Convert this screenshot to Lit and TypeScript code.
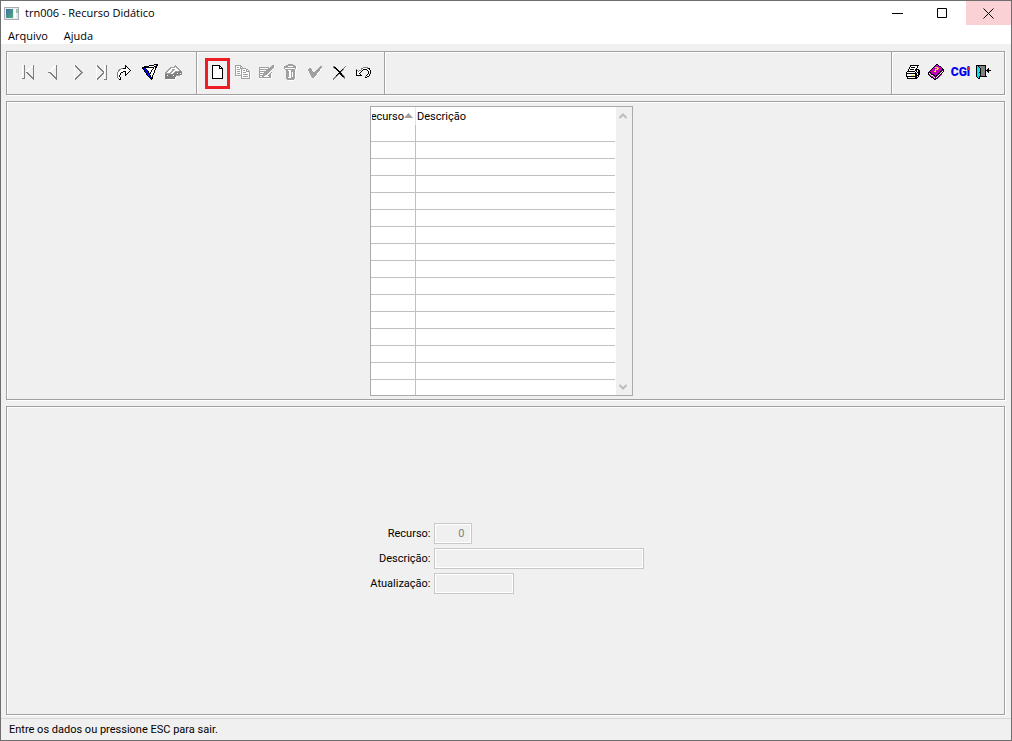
import { LitElement, html, svg, css } from "lit";
import { customElement, property } from "lit/decorators.js";

const palette: Record<string, string> = {
  k: "#000000",
  g: "#808080",
  a: "#a0a0a0",
  l: "#c4c4c4",
  w: "#ffffff",
  b: "#0000ff",
  c: "#00e5ee",
  m: "#c000c0",
  p: "#700070",
  y: "#ffee00",
};

// Each glyph sits on a 24px grid: x and y give the offset of its first pixel.
const glyphs: Record<string, { x: number; y: number; rows: string[] }> = {
  first: { x: 6, y: 5, rows: [
    "w.g.......wg", "w.g......wwg", "w.g.....ww.g", "w.g....ww..g", "w.g...ww...g", "w.g..ww....g", "w.g.ww.....g",
    "w.g.gg.....g", "w.g..gg....g", "w.g...gg...g", "w.g....gg..g", "w.g.....gg.g", "w.g......ggg", "ggg.......gg", "..........wg" ] },
  prev: { x: 8, y: 5, rows: [
    ".......wg", "......wwg", ".....ww.g", "....ww..g", "...ww...g", "..ww....g", ".ww.....g", "ggg.....g",
    "..gg....g", "...gg...g", "....gg..g", ".....gg.g", "......ggg", ".......gg", "........g" ] },
  next: { x: 10, y: 5, rows: [
    "wg.......", "wgg......", "w.gg.....", "w..gg....", "w...gg...", "w....gg..", "w.....gg.", "w......gg",
    "w.....gg.", "w....gg..", "w...gg...", "w..gg....", "w.gg.....", "wgg......", "wg......." ] },
  last: { x: 8, y: 5, rows: [
    "wg......wwg", "wgg.....w.g", "w.gg....w.g", "w..gg...w.g", "w...gg..w.g", "w....gg.w.g", "w.....ggw.g", "w......gw.g",
    "w.....ggw.g", "w....gg.w.g", "w...gg..w.g", "w..gg...w.g", "w.gg....w.g", "wgg.....w.g", "wg......ggg" ] },
  goto: { x: 5, y: 5, rows: [
    "........k.....", "........kk....", "........kwk...", "....ggkkkwwk..", "..ggwwwwwwwwk.", ".ggwwwwwwwwwwk", ".gwwwwkkkwwwk.",
    "gwwwkk..kwwk..", "gwwk....kwk...", "gwwk....kk....", "gwk.....k.....", "gwk...........", "gwwk..........", ".gwk..........", "..kk.........." ] },
  filter: { x: 6, y: 4, rows: [
    "............kkkk", ".......kkkkkwwkk", "..kkkkkwwwwwkkk.", "kkkkkkkkkkkkwkk.", "kbbkwwwwwwwkwk..", ".kbbkwwwwwkwwk..", "..kbbkwwwkwwk...", "..kbbbkwwkwwk...",
    "...kbbkwkwwwk...", "....kbbkkwwk....", "....kbbkwwwk....", ".....kbbkwk.....", "......kbkwk.....", ".......kbkk.....", "........kkk.....", ".........k......" ] },
  drive: { x: 5, y: 5, rows: [
    "..........aw.....", ".........aaaw....", ".....aaaaawaaw...", "....aawwwwwwaaw..", "...aawwaaawwwaaw.", "..aawwwaawwwwwaaw", ".aawwwaawwaaaagga", "aawwwaawwaggggggg",
    "aaaaaawwagggwggwg", "ggggggggggggggggg", "ggwgggggwggaaaaww", "gggggggggggw.....", "ggggggggggw......", "ggggggggggw......", ".wwwwwwwww......." ] },
  page: { x: 7, y: 5, rows: [
    "kkkkkkkk...", "kwwwwwwkk..", "kwwwwwwkwk.", "kwwwwwwkkkk", "kwwwwwwwwwk", "kwwwwwwwwwk", "kwwwwwwwwwk", "kwwwwwwwwwk",
    "kwwwwwwwwwk", "kwwwwwwwwwk", "kwwwwwwwwwk", "kwwwwwwwwwk", "kwwwwwwwwwk", "kkkkkkkkkkk" ] },
  copy: { x: 6, y: 5, rows: [
    "aaaaaa..........", "awwwwaa.........", "awaawawa........", "awwwwaaaaaa.....", "awaaawawwwwaa...", "awwwwwawaawawa..", "awaaawawwwwaaaaw", "awwwwwawaaawwwaw",
    "awaaawawwwwwwwaw", "awwwwwawaaaaawaw", "aaaaaaawwwwwwwaw", ".wwwwwawaaaaawaw", "......awwwwwwwaw", "......aaaaaaaaaw" ] },
  edit: { x: 6, y: 5, rows: [
    ".............aa.", "............aaaw", "aaaaaaaaaa.aaaaw", "awwwwwwwwaaaaaw.", "aaaaaaaaaaaaaw..", "awwwwwwaaaaaw...", "aaaaaaaaaaaw....", "awwwwaaaaaw.a...",
    "aaaaaaaaaw.aw...", "awwwaaaaw.aaw...", "aaaaaaww.aaaw...", "awwaawwwwwaaw...", "aaaaaaaaaaaaw...", "wwwwwwwwwwwww..." ] },
  trash: { x: 7, y: 4, rows: [
    "....aaaaa....", "..aaaaaaaaa..", "aaaawwwwwaaaw", "aaaaaaaaaaaaw", "awwwwwwwwwwaw", ".aaaaaaaaaaww", "..aawwwaaaa..", "..aaawwaaaaw.",
    "..aaawwawaaw.", "..aaawwawaaw.", "..aaawwawaaw.", "..aaawwawaaw.", "..aaawwawaaw.", "..aawwwaaaaw.", "..aaaaaaaaaw.", "...aaaaaaaw..", "....wwwwww..." ] },
  check: { x: 7, y: 6, rows: [
    "............aa", "...........aaa", ".aa.......aaaw", "aaaa.....aaaw.", "aaaaw...aaaaw.", ".aaaaw.aaaaw..", ".aaaaaaaaaw...", "..aaaaaaaw....",
    "..aaaaaaaw....", "...aaaaaw.....", "...aaaaw......", "....aaw......." ] },
  cancel: { x: 8, y: 6, rows: [
    "gg..........g.", "gkk........g..", ".gkk......g...", "...kk....kg...", "....kk..kg....", ".....kkkg.....", "......kk......",
    ".....kkkk.....", "....kg.kkg....", "...kg...kkg...", "..gg.....kkg..", ".gg.......gg..", "gg.........g..", "g............." ] },
  undo: { x: 7, y: 7, rows: [
    ".......ggggg...", ".....ggwwwwgkk.", "g....gwkkkkwwk.", "kg.ggwk....kwwk", "kwgwwk......kwk", "kwwwk.......kwk", "kwwk........kwk", "kwwwk......kwk.",
    "kkkkkk....kwwk.", ".........gwkk..", ".........kk...." ] },
  print: { x: 6, y: 5, rows: [
    "....kkkkkkkkk.", "....kwwwwwwk..", "...kwkkkkwwk..", "...kwwwwwwk...", "..kwkkkkwkkkk.", "..kwwwwwwkkwkk", ".kkkkkkkkwkwkk", "kwwwwwwwwkwkkk",
    "kkkkkkkkkkkwkk", "kwwwwwwwwkkwkk", "kwwwwyyywkkkk.", "kkkkkkkkkkkwk.", ".kwwwwwwwkkk..", ".kkkkkkkkkk..." ] },
  help: { x: 4, y: 4, rows: [
    "........kk......", ".......kmmk.....", "......kmmmmkk...", ".....kmyyymmmk..", "....kmmmmyymmmk.", "...kmmmyyymmmmkk", "..kmmmmymmmmmkpk", ".kmmmmyymmmmkpwk",
    "kpkmmmmmmmmkpwk.", "kwpkmmmmmmkpwk..", "kmwpkkmmmkpwkm..", ".kmwwpkmkpwkm...", "..kmmwpkpwkm....", "...kkmwpwkm.....", ".....kmkkm......", "......kk........" ] },
  exit: { x: 4, y: 5, rows: [
    "kkkkkkkkkk.....", "kckggggggk.....", "kcckgggggk.....", "kccckggggk..k..", "kccckggggk.kk..", "kccckggggkkkkkk", "kccckggggk.kk..", "kcckkggggk..k..",
    "kccckggggk.....", "kccckggggk.....", "kccckggggk.....", "kcckkkkkkkk....", ".kck...........", "..kk..........." ] },
};

@customElement("tool-glyph")
class ToolGlyph extends LitElement {
  @property() name = "";

  static styles = css`
    :host { display: block; width: 24px; height: 24px; }
    svg { display: block; }
  `;

  render() {
    const glyph = glyphs[this.name];
    if (!glyph) return null;
    const cells = glyph.rows.flatMap((row, j) =>
      [...row].map((ch, i) =>
        palette[ch]
          ? svg`<rect x=${glyph.x + i} y=${glyph.y + j} width="1" height="1" fill=${palette[ch]}></rect>`
          : null
      )
    );
    return html`<svg width="24" height="24" viewBox="0 0 24 24" shape-rendering="crispEdges" aria-hidden="true">${cells}</svg>`;
  }
}

type Tool = [name: string, label: string, disabled?: boolean];

const navigation: Tool[] = [
  ["first", "Primeiro", true],
  ["prev", "Anterior", true],
  ["next", "Próximo", true],
  ["last", "Último", true],
  ["goto", "Ir para"],
  ["filter", "Filtro"],
  ["drive", "Pesquisa", true],
];
const editing: Tool[] = [
  ["page", "Incluir"],
  ["copy", "Copiar", true],
  ["edit", "Modificar", true],
  ["trash", "Eliminar", true],
  ["check", "Confirmar", true],
  ["cancel", "Cancelar"],
  ["undo", "Desfazer"],
];

@customElement("app-root")
class AppRoot extends LitElement {
  static styles = css`
    :host {
      display: block;
      font: 11px/14px Roboto, "Liberation Sans", sans-serif;
      color: #000;
    }
    * { box-sizing: border-box; }
    button {
      border: 0;
      padding: 0;
      background: none;
      font: inherit;
      color: inherit;
    }
    .window {
      display: flex;
      flex-direction: column;
      min-height: 100vh;
      border: 1px solid #6e6e6e;
      background: #f0f0f0;
    }
    .titlebar {
      display: flex;
      align-items: center;
      height: 24px;
      padding-left: 3px;
      background: #fff;
    }
    .title {
      flex: 1;
      margin: 0 0 0 6px;
      font: 11px/16px "Open Sans", sans-serif;
    }
    .caption {
      display: grid;
      place-items: center;
      width: 45px;
      height: 24px;
    }
    .close { background: #fad1d5; }
    .menu {
      display: flex;
      gap: 16px;
      height: 19px;
      padding: 0 7px;
      background: #fff;
      font: 11px/19px "Open Sans", sans-serif;
    }
    .menu button { line-height: 21px; }
    .body {
      flex: 1;
      display: flex;
      flex-direction: column;
      gap: 6px;
      padding: 7px 6px 3px 5px;
    }
    .panel {
      border: 1px solid #a0a0a0;
      box-shadow: 1px 1px 0 #fff, inset 1px 1px 0 #fff;
    }
    .toolbar { display: flex; height: 44px; }
    .group {
      display: flex;
      align-items: flex-start;
      padding: 6px 8px 0;
      border-right: 1px solid #a0a0a0;
      box-shadow: 1px 0 0 #fff;
    }
    .group:first-child { padding: 6px 12px 0 9px; }
    .group:nth-child(2) { padding-right: 11px; }
    .group:last-child { border: 0; box-shadow: none; }
    .spacer { flex: 1; }
    .tool {
      display: block;
      width: 24px;
      height: 31px;
      padding-bottom: 3px;
    }
    .page { width: 25px; margin-right: -1px; outline: 3px solid #ee1c24; outline-offset: -3px; }
    .cgi {
      position: relative;
      display: block;
      padding-left: 1px;
      color: #0000f0;
      font: 900 12px/24px Roboto, sans-serif;
    }
    .dot {
      position: absolute;
      top: 7px;
      right: 2px;
      width: 3px;
      height: 3px;
      background: #f02020;
    }
    .list {
      display: flex;
      justify-content: center;
      padding: 4px 8px 3px 0;
    }
    .grid {
      display: flex;
      border: 1px solid #a9a9ae;
      background: #fff;
    }
    table {
      border-collapse: separate;
      border-spacing: 0;
      table-layout: fixed;
      width: 244px;
    }
    .code { width: 45px; }
    th {
      height: 18px;
      padding: 2px 0 0 1px;
      font-weight: 400;
      text-align: left;
      white-space: nowrap;
    }
    th:first-child { border-right: 1px solid #e4e4e4; }
    .sort {
      display: flex;
      justify-content: flex-end;
      align-items: center;
      overflow: hidden;
    }
    .arrow { flex: none; margin: 0 2px 3px 0; }
    td {
      height: 17px;
      padding: 0;
      border-bottom: 1px solid #c0c0c0;
    }
    td:first-child { border-right: 1px solid #c0c0c0; }
    tr:last-child td { height: 15px; border-bottom: 0; }
    .scroll {
      display: flex;
      flex-direction: column;
      justify-content: space-between;
      width: 16px;
      margin-left: 1px;
      background: #f0f0f0;
    }
    .scroll button { display: grid; place-items: center; width: 14px; height: 17px; }
    .detail {
      flex: 1;
      display: grid;
      place-items: center;
      padding: 0 0 5px 3px;
    }
    .form {
      display: grid;
      grid-template-columns: 60px 210px;
      gap: 4px 3px;
      align-items: center;
    }
    label { padding-top: 2px; text-align: right; white-space: nowrap; justify-self: end; }
    input {
      height: 21px;
      margin: 0;
      padding: 1px 6px 0;
      border: 1px solid #c8c8c8;
      border-radius: 0;
      box-shadow: inset 0 0 0 1px #fff;
      background: #f0f0f0;
      color: #808080;
      font: inherit;
    }
    .number { width: 38px; text-align: right; }
    .text { width: 210px; }
    .date { width: 80px; }
    .status {
      height: 22px;
      padding-left: 8px;
      border-top: 1px solid #d7d7d7;
      line-height: 22px;
    }
  `;

  private tools(items: Tool[]) {
    return items.map(
      ([name, label, disabled]) => html`
        <button class="tool ${name}" aria-label=${label} ?disabled=${disabled}>
          <tool-glyph name=${name}></tool-glyph>
        </button>`
    );
  }

  render() {
    return html`
      <div class="window">
        <header class="titlebar">
          <svg width="15" height="13" viewBox="0 0 15 13" shape-rendering="crispEdges" aria-hidden="true">
            <defs>
              <linearGradient id="screen" x1="0" y1="0" x2="1" y2="1">
                <stop offset="0" stop-color="#3f6fa8"></stop>
                <stop offset="1" stop-color="#4fae73"></stop>
              </linearGradient>
            </defs>
            <rect x="0.5" y="0.5" width="14" height="12" fill="#e9edf0" stroke="#a8adb2"></rect>
            <rect x="2" y="2" width="7" height="9" fill="url(#screen)"></rect>
            <rect x="10" y="2" width="2" height="9" fill="#fff"></rect>
            <rect x="12" y="2" width="2" height="4" fill="#9cc4b0"></rect>
          </svg>
          <h1 class="title">trn006 - Recurso Didático</h1>
          <button class="caption" aria-label="Minimizar">
            <svg width="13" height="11"><path d="M0 5.5H11" stroke="#000"></path></svg>
          </button>
          <button class="caption" aria-label="Maximizar">
            <svg width="13" height="11"><path d="M.5.5h9v9h-9z" fill="none" stroke="#000"></path></svg>
          </button>
          <button class="caption close" aria-label="Fechar">
            <svg width="11" height="11"><path d="M.5.5l10 10M10.5.5l-10 10" stroke="#000"></path></svg>
          </button>
        </header>
        <nav class="menu">
          <button>Arquivo</button>
          <button>Ajuda</button>
        </nav>
        <main class="body">
          <div class="panel toolbar">
            <div class="group">${this.tools(navigation)}</div>
            <div class="group">${this.tools(editing)}</div>
            <div class="group spacer"></div>
            <div class="group">
              ${this.tools([["print", "Imprimir"], ["help", "Ajuda"]])}
              <button class="tool"><span class="cgi">CGi<i class="dot"></i></span></button>
              ${this.tools([["exit", "Sair"]])}
            </div>
          </div>
          <section class="panel list">
            <div class="grid">
              <table>
                <colgroup><col class="code" /><col /></colgroup>
                <thead>
                  <tr>
                    <th>
                      <div class="sort">
                        <span>Recurso</span>
                        <svg class="arrow" width="9" height="5" aria-hidden="true"><path d="M0 5L4.500 0L9 5z" fill="#a0a0a0"></path></svg>
                      </div>
                    </th>
                    <th>Descrição</th>
                  </tr>
                </thead>
                <tbody>
                  ${Array.from({ length: 16 }, () => html`<tr><td></td><td></td></tr>`)}
                </tbody>
              </table>
              <div class="scroll">
                <button aria-label="Rolar para cima" disabled>
                  <svg width="8" height="6"><path d="M.5 5L4 1.500L7.500 5" fill="none" stroke="#bdbdbd" stroke-width="2"></path></svg>
                </button>
                <button aria-label="Rolar para baixo" disabled>
                  <svg width="8" height="6"><path d="M.5 1L4 4.500L7.500 1" fill="none" stroke="#bdbdbd" stroke-width="2"></path></svg>
                </button>
              </div>
            </div>
          </section>
          <section class="panel detail">
            <form class="form">
              <label for="recurso">Recurso:</label>
              <input id="recurso" class="number" value="0" disabled />
              <label for="descricao">Descrição:</label>
              <input id="descricao" class="text" disabled />
              <label for="atualizacao">Atualização:</label>
              <input id="atualizacao" class="date" disabled />
            </form>
          </section>
        </main>
        <footer class="status">Entre os dados ou pressione ESC para sair.</footer>
      </div>
    `;
  }
}
